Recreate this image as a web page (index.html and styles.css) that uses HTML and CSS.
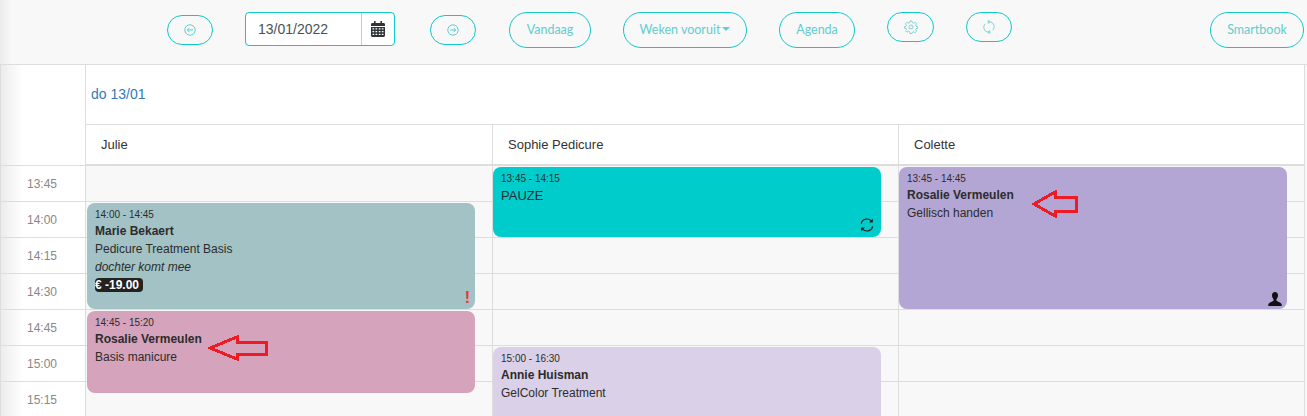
FILE: index.html
```html
<!DOCTYPE html>
<html lang="nl">
<head>
    <meta charset="UTF-8">
    <meta name="viewport" content="width=device-width, initial-scale=1.0">
    <title>Agenda</title>
    <link rel="stylesheet" href="styles.css">
</head>
<body>

<div class="toolbar">
    <button class="btn btn-arrow btn-prev">
        <svg class="btn-icon" viewBox="0 0 12 12"><circle cx="6" cy="6" r="5.2"/><path d="M9 6H3.400M5.400 3.900L3.300 6l2.100 2.100"/></svg>
    </button>
    <div class="date-input">
        <span class="date-value">13/01/2022</span>
        <span class="date-addon">
            <svg class="calendar-icon" viewBox="0 0 14 16">
                <path fill="#2f3338" d="M3 0h1.600v2H9.400V0H11v2h1.600C13.400 2 14 2.600 14 3.400V5H0V3.400C0 2.600 .6 2 1.400 2H3z"/>
                <path fill="#2f3338" fill-rule="evenodd" d="M0 6h14v8.600c0 .8-.6 1.400-1.400 1.400H1.400C.6 16 0 15.400 0 14.600zM1.500 7.300v1.300h1.700V7.300zm3 0v1.300h1.700V7.300zm3.300 0v1.300h1.700V7.300zm3 0v1.300h1.700V7.300zM1.500 10v1.300h1.700V10zm3 0v1.300h1.700V10zm3.300 0v1.300h1.700V10zm3 0v1.300h1.700V10zM1.500 12.700V14h1.700v-1.300zm3 0V14h1.700v-1.300zm3.300 0V14h1.700v-1.300zm3 0V14h1.700v-1.300z"/>
            </svg>
        </span>
    </div>
    <button class="btn btn-arrow btn-next">
        <svg class="btn-icon" viewBox="0 0 12 12"><circle cx="6" cy="6" r="5.2"/><path d="M3 6h5.600M6.600 3.900L8.700 6 6.600 8.100"/></svg>
    </button>
    <button class="btn btn-today">Vandaag</button>
    <button class="btn btn-weeks">Weken vooruit<span class="caret"></span></button>
    <button class="btn btn-agenda">Agenda</button>
    <button class="btn btn-small btn-settings">
        <svg class="btn-icon btn-icon-large" viewBox="0 0 14 14">
            <circle cx="7" cy="7" r="2"/>
            <path d="M6 1h2l.4 1.700 1.200.5L11.100 2.300l1.400 1.400-.9 1.500.5 1.200L13.800 6.800v1.400L12.100 8.600l-.5 1.200.9 1.500-1.400 1.400-1.500-.9-1.200.5L8 13.500H6l-.4-1.700-1.200-.5-1.500.9-1.400-1.400.9-1.500-.5-1.200L.2 8.200V6.800l1.700-.4.5-1.200-.9-1.500 1.400-1.400 1.500.9 1.200-.5z"/>
        </svg>
    </button>
    <button class="btn btn-small btn-refresh">
        <svg class="btn-icon btn-icon-large" viewBox="0 0 14 14">
            <path d="M8.200 1.800A5 5 0 0 1 10.800 10.200M5.800 12.200A5 5 0 0 1 3.200 3.800"/>
            <path d="M6.200 .4v3l2-1.500zM7.800 13.600v-3l-2 1.500z"/>
        </svg>
    </button>
    <button class="btn btn-smartbook">Smartbook</button>
</div>

<div class="agenda">
    <div class="corner"></div>
    <div class="date-row"><a class="date-link">do 13/01</a></div>

    <div class="resource">Julie</div>
    <div class="resource">Sophie Pedicure</div>
    <div class="resource">Colette</div>

    <div class="times">
        <div class="time">13:45</div>
        <div class="time">14:00</div>
        <div class="time">14:15</div>
        <div class="time">14:30</div>
        <div class="time">14:45</div>
        <div class="time">15:00</div>
        <div class="time">15:15</div>
    </div>

    <div class="column column-first">
        <div class="event event-marie">
            <div class="event-time">14:00 - 14:45</div>
            <div class="event-name">Marie Bekaert</div>
            <div class="event-line">Pedicure Treatment Basis</div>
            <div class="event-line event-note">dochter komt mee</div>
            <div class="event-line"><span class="badge">€ -19.00</span></div>
            <span class="event-alert">!</span>
        </div>
        <div class="event event-rosalie-1">
            <div class="event-time">14:45 - 15:20</div>
            <div class="event-name">Rosalie Vermeulen</div>
            <div class="event-line">Basis manicure</div>
            <svg class="red-arrow arrow-left" viewBox="0 0 60 26"><path d="M2 13L29 2v5h29v12H29v5z"/></svg>
        </div>
    </div>

    <div class="column">
        <div class="event event-pauze">
            <div class="event-time">13:45 - 14:15</div>
            <div class="event-title">PAUZE</div>
            <svg class="event-icon sync-icon" viewBox="0 0 14 14">
                <path d="M1.300 5.600A5.800 5.800 0 0 1 11.500 3.200M12.700 8.400A5.800 5.800 0 0 1 2.500 10.800"/>
                <path class="solid" d="M12.800 .8v3.800H9zM1.200 13.200V9.400H5z"/>
            </svg>
        </div>
        <div class="event event-annie">
            <div class="event-time">15:00 - 16:30</div>
            <div class="event-name">Annie Huisman</div>
            <div class="event-line">GelColor Treatment</div>
        </div>
    </div>

    <div class="column">
        <div class="event event-rosalie-2">
            <div class="event-time">13:45 - 14:45</div>
            <div class="event-name">Rosalie Vermeulen</div>
            <div class="event-line">Gellisch handen</div>
            <svg class="red-arrow arrow-right" viewBox="0 0 46 28"><path d="M2 14L23 2v5h21v14H23v5z"/></svg>
            <svg class="event-icon user-icon" viewBox="0 0 14 14">
                <path d="M7 0c1.900 0 3 1.300 3 3.300 0 1.500-.6 2.900-1.500 3.800v1.500c0 .6 1.400 1 3 1.700 1.100.5 1.900 1.200 2.200 2.200V14H.3v-1.500c.3-1 1.100-1.700 2.200-2.200 1.600-.7 3-1.100 3-1.700V7.100C4.600 6.200 4 4.800 4 3.300 4 1.300 5.100 0 7 0z"/>
            </svg>
        </div>
    </div>
</div>

</body>
</html>
```

FILE: styles.css
```css
html, body {
    height: 100%;
}

body {
    margin: 0;
    overflow: hidden;
    background-color: #f8f8f8;
    font-family: "Liberation Sans", Arial, sans-serif;
    color: #333333;
}

/* toolbar */

.toolbar {
    display: flex;
    align-items: flex-start;
    gap: 32px;
    height: 64px;
    box-sizing: border-box;
    padding: 12px 3px 0 167px;
    background: linear-gradient(to right, #ececec, #f8f8f8 12px);
}

.btn {
    display: flex;
    align-items: center;
    justify-content: center;
    box-sizing: border-box;
    height: 36px;
    padding: 0 0 1px;
    border: 1px solid #0fc8ca;
    border-radius: 18px;
    background: transparent;
    font-family: Lato, sans-serif;
    font-size: 12.5px;
    color: #62cdcf;
}

.btn-arrow {
    width: 46px;
    height: 30px;
    margin-top: 3px;
    border-radius: 15px;
}

.btn-next {
    margin-left: 3px;
}

.btn-small {
    width: 47px;
    height: 30px;
    border-radius: 15px;
}

.btn-refresh {
    width: 46px;
}

.btn-today { width: 82px; margin-left: 1px; }
.btn-weeks { width: 124px; }
.btn-agenda { width: 76px; }
.btn-smartbook { width: 94px; margin-left: auto; }

.btn-icon {
    width: 12px;
    height: 12px;
    fill: none;
    stroke: #62cdcf;
    stroke-width: 1;
}

.btn-icon-large {
    width: 14px;
    height: 14px;
    stroke-width: .8;
}

.caret {
    width: 0;
    height: 0;
    margin: 0 0 2px 2px;
    border-top: 4px solid #62cdcf;
    border-left: 4px solid transparent;
    border-right: 4px solid transparent;
}

.date-input {
    display: flex;
    box-sizing: border-box;
    width: 150px;
    height: 34px;
    border: 1px solid #0fc8ca;
    border-radius: 4px;
    background: white;
}

.date-value {
    width: 116px;
    padding-left: 12px;
    box-sizing: border-box;
    border-right: 1px solid #cccccc;
    font-size: 14px;
    line-height: 32px;
    color: #495057;
}

.date-addon {
    flex: 1;
    display: flex;
    align-items: center;
    justify-content: center;
}

.calendar-icon {
    width: 14px;
    height: 16px;
}

/* agenda grid */

.agenda {
    display: grid;
    grid-template-columns: 85px 407px 406px 407px;
    grid-template-rows: 60px 41px auto;
    height: 352px;
    box-sizing: border-box;
    overflow: hidden;
    border-top: 1px solid #dddddd;
}

.corner {
    grid-row: 1 / span 2;
    border-left: 1px solid #dddddd;
    border-bottom: 1px solid #dddddd;
    background: linear-gradient(to right, #ececec, white 22px);
}

.date-row {
    grid-column: 2 / span 3;
    display: flex;
    align-items: center;
    padding: 0 0 2px 5px;
    border-left: 1px solid #dddddd;
    border-right: 1px solid #dddddd;
    border-bottom: 1px solid #dddddd;
    background: white;
}

.date-link {
    font-size: 14px;
    color: #337ab7;
}

.resource {
    display: flex;
    align-items: center;
    padding-left: 15px;
    border-left: 1px solid #dddddd;
    border-bottom: 2px solid #dddddd;
    background: white;
    font-size: 13px;
    color: #333333;
}

.resource:nth-child(5) {
    border-right: 1px solid #dddddd;
}

.times {
    border-left: 1px solid #dddddd;
    background: linear-gradient(to right, #ececec, white 22px);
}

.time {
    display: flex;
    align-items: center;
    justify-content: center;
    box-sizing: border-box;
    height: 36px;
    padding-right: 2px;
    border-bottom: 1px solid #dddddd;
    font-size: 12px;
    color: #888888;
}

.column {
    display: grid;
    grid-auto-rows: 36px;
    grid-template-columns: 388px;
    box-sizing: border-box;
    border-left: 1px solid #dddddd;
    background: repeating-linear-gradient(to bottom, transparent 0, transparent 35px, #dddddd 35px, #dddddd 36px);
}

.column:last-child {
    border-right: 1px solid #dddddd;
}

.column-first {
    padding-left: 1px;
}

/* events */

.event {
    position: relative;
    margin: 1px 0;
    padding: 5px 8px 0;
    border-radius: 8px;
    font-size: 12px;
    line-height: 18px;
    color: #2c2c2c;
}

.event-marie { grid-row: 2 / span 3; background: #a2c2c6; }
.event-rosalie-1 { grid-row: 5 / span 3; margin-bottom: 25px; background: #d5a3bc; }
.event-pauze { grid-row: 1 / span 2; background: #00cccc; }
.event-annie { grid-row: 6 / span 6; background: #dad1e8; }
.event-rosalie-2 { grid-row: 1 / span 4; background: #b3a6d4; }

.event-time {
    font-size: 10px;
    line-height: 13px;
    margin-bottom: 1px;
}

.event-name {
    font-weight: bold;
}

.event-note {
    font-style: italic;
}

.event-title {
    font-size: 13px;
    line-height: 20px;
}

.badge {
    display: inline-block;
    padding-right: 4px;
    border-radius: 4px;
    background: #222222;
    font-weight: bold;
    line-height: 14px;
    color: white;
}

.event-alert {
    position: absolute;
    right: 5px;
    bottom: 3px;
    font-size: 16px;
    font-weight: bold;
    line-height: 16px;
    color: #ee3333;
}

.event-icon {
    position: absolute;
    width: 14px;
    height: 14px;
}

.sync-icon {
    right: 7px;
    bottom: 5px;
    fill: none;
    stroke: #222222;
    stroke-width: 1.2;
}

.sync-icon .solid {
    fill: #222222;
    stroke: none;
}

.user-icon {
    right: 5px;
    bottom: 3px;
    fill: #111111;
}

.red-arrow {
    position: absolute;
    fill: none;
    stroke: #ed1c24;
    stroke-width: 3;
    shape-rendering: crispEdges;
}

.arrow-left {
    left: 121px;
    top: 24px;
    width: 60px;
    height: 26px;
}

.arrow-right {
    left: 133px;
    top: 23px;
    width: 46px;
    height: 28px;
}
```
